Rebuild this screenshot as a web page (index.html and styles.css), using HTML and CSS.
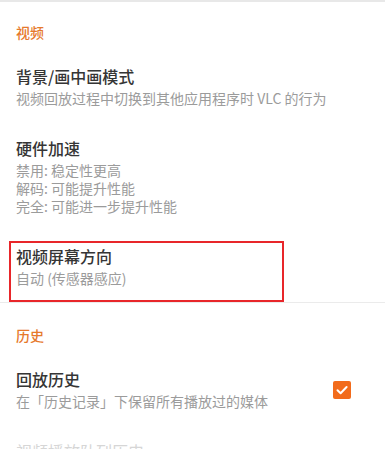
FILE: index.html
```html
<!DOCTYPE html>
<html lang="zh-CN">
<head>
    <meta charset="UTF-8">
    <meta name="viewport" content="width=device-width, initial-scale=1.0">
    <title>VLC 设置</title>
    <link rel="stylesheet" href="styles.css">
</head>
<body>
    <div class="topline"></div>

    <div class="section-title">视频</div>

    <div class="pref">
        <div class="pref-text">
            <div class="pref-title">背景/画中画模式</div>
            <div class="pref-summary">视频回放过程中切换到其他应用程序时 VLC 的行为</div>
        </div>
    </div>

    <div class="pref">
        <div class="pref-text">
            <div class="pref-title">硬件加速</div>
            <div class="pref-summary">
                <div class="summary-line">禁用: 稳定性更高</div>
                <div class="summary-line">解码: 可能提升性能</div>
                <div class="summary-line">完全: 可能进一步提升性能</div>
            </div>
        </div>
    </div>

    <div class="pref marked">
        <div class="pref-text">
            <div class="pref-title">视频屏幕方向</div>
            <div class="pref-summary">自动 (传感器感应)</div>
        </div>
        <div class="highlight"></div>
    </div>

    <div class="divider"></div>

    <div class="section-title">历史</div>

    <div class="pref">
        <div class="pref-text">
            <div class="pref-title">回放历史</div>
            <div class="pref-summary">在「历史记录」下保留所有播放过的媒体</div>
        </div>
        <div class="checkbox">
            <svg width="18" height="18" viewBox="0 0 18 18">
                <path d="M4.5 9.2 L7.6 12.2 L13.6 6" fill="none" stroke="#fff" stroke-width="2" stroke-linecap="round" stroke-linejoin="round"/>
            </svg>
        </div>
    </div>

    <div class="pref disabled">
        <div class="pref-text">
            <div class="pref-title">视频播放队列历史</div>
        </div>
    </div>
</body>
</html>
```

FILE: styles.css
```css
body {
    margin: 0;
    background: #fff;
    font-family: "Noto Sans CJK SC", "Noto Sans", sans-serif;
    overflow: hidden;
}

.topline {
    height: 2px;
    background: #e8e8e8;
}

.section-title {
    padding: 20px 16px 8px;
    font-size: 14px;
    line-height: 20px;
    font-weight: 500;
    color: #e6792c;
}

.divider + .section-title {
    padding-top: 22px;
}

.pref {
    display: flex;
    align-items: center;
    padding: 15px 34px 15px 16px;
}

.pref-text {
    flex: 1;
}

.pref-title {
    font-size: 16px;
    line-height: 22px;
    font-weight: 500;
    color: #353535;
}

.pref-summary {
    margin-top: 2px;
    font-size: 14px;
    line-height: 18px;
    color: #9b9b9b;
}

.summary-line {
    height: 18px;
}

.marked {
    position: relative;
}

.highlight {
    position: absolute;
    top: 11px;
    left: 9px;
    width: 271px;
    height: 57px;
    border: 2px solid #e8262a;
}

.divider {
    height: 1px;
    background: #ebebeb;
}

.checkbox {
    width: 18px;
    height: 18px;
    border-radius: 2px;
    background: #f26b1b;
    margin-top: 1px;
}

.checkbox svg {
    display: block;
}

.disabled .pref-title {
    color: #d6d6d6;
    font-weight: 400;
}
```
